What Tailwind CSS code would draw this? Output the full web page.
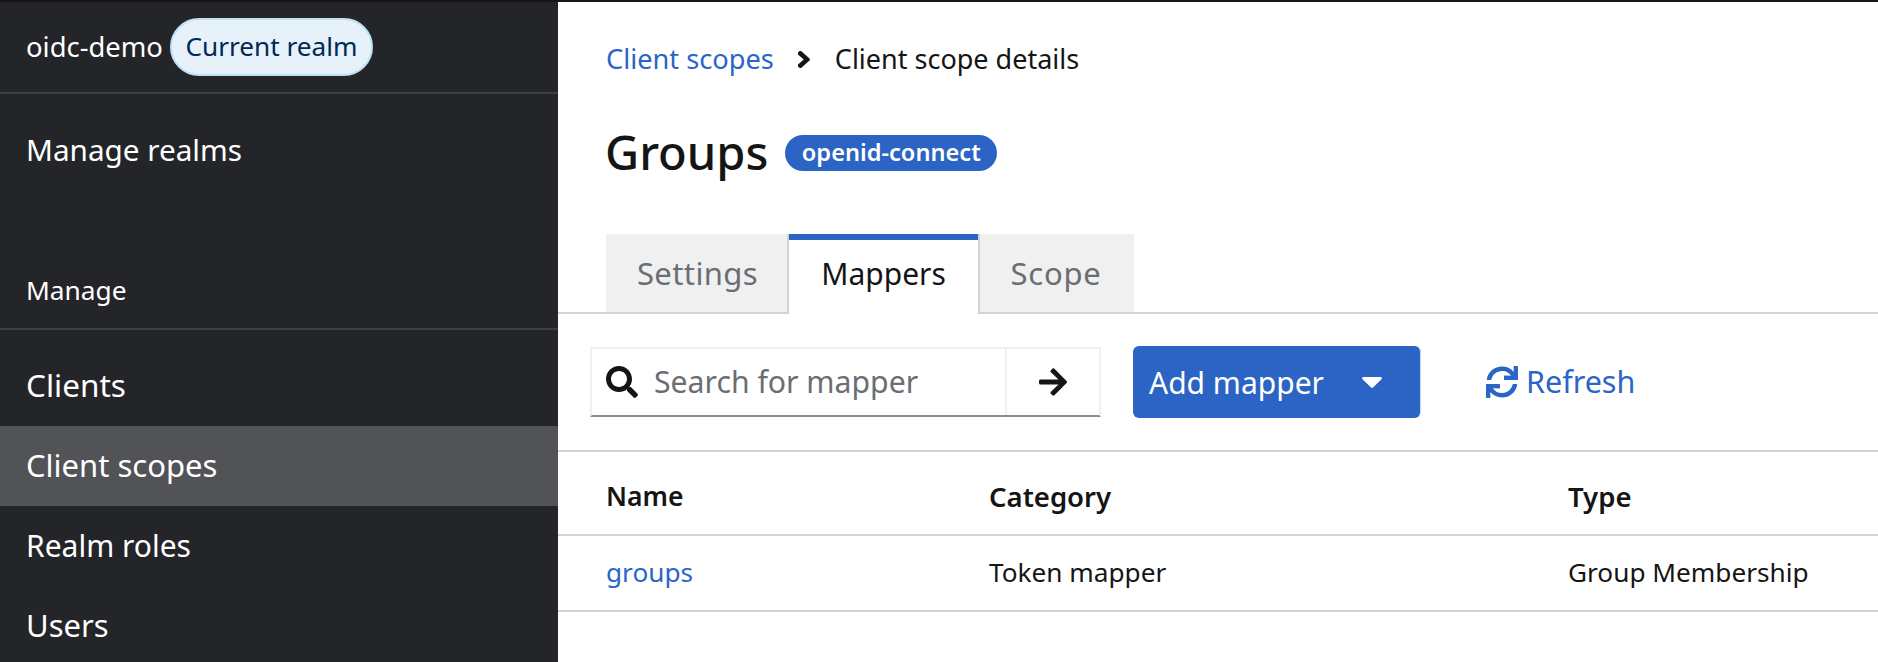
<!DOCTYPE html>
<html lang="en">
<head>
  <meta charset="UTF-8" />
  <title>Client scope details</title>
  <script src="https://cdn.jsdelivr.net/npm/@tailwindcss/browser@4"></script>
</head>
<body class="h-[662px] overflow-hidden bg-white font-['Noto_Sans',sans-serif]">
  <div class="h-[2px] bg-[#151515]"></div>
  <div class="flex h-[660px]">
    <!-- sidebar -->
    <aside class="w-[558px] shrink-0 bg-[#232529] text-white">
      <div class="flex h-[92px] items-center border-b-2 border-[#3c3f42] pl-[26px]">
        <span class="mr-[7px] text-[27.4px]">oidc-demo</span>
        <span class="flex h-[58px] w-[203px] items-center justify-center rounded-full border-2 border-[#bee1f4] bg-[#e7f1fa] text-[26.2px] text-[#002952]">Current realm</span>
      </div>
      <div class="flex h-[114px] items-start pl-[26px] pt-[34px] text-[29.7px] leading-[44px]">Manage realms</div>
      <div class="h-[122px] border-b-2 border-[#3c3f42] pl-[26px] pt-[64px] text-[26.3px] leading-[36px]">Manage</div>
      <nav class="text-[30px]">
        <div class="flex h-[96px] items-center pl-[26px] pt-[14px] text-[31.5px]">Clients</div>
        <div class="flex h-[80px] items-center bg-[#515357] pb-[2px] pl-[26px] text-[31px]">Client scopes</div>
        <div class="flex h-[80px] items-center pb-[2px] pl-[26px]">Realm roles</div>
        <div class="flex h-[80px] items-center pb-[2px] pl-[26px] text-[31px]">Users</div>
      </nav>
    </aside>

    <!-- main -->
    <main class="min-w-0 flex-1">
      <div class="flex h-[114px] items-center pl-[48px] text-[27.2px] text-[#151515]">
        <a class="text-[#2b65c8]">Client scopes</a>
        <svg class="ml-[24px] mr-[25px] h-[17px] w-[12px]" viewBox="32 96 200 320" preserveAspectRatio="none" fill="#151515"><path d="M224.3 273l-136 136c-9.4 9.4-24.6 9.4-33.9 0l-22.6-22.6c-9.4-9.4-9.4-24.6 0-33.9l96.4-96.4-96.4-96.4c-9.4-9.4-9.4-24.6 0-33.9L54.3 103c9.4-9.4 24.6-9.4 33.9 0l136 136c9.5 9.4 9.5 24.6.1 34z"/></svg>
        <span class="text-[27px]">Client scope details</span>
      </div>
      <div class="flex h-[118px] items-center pb-[46px] pl-[47px]">
        <h1 class="text-[47px] font-medium text-[#151515]">Groups</h1>
        <span class="ml-[17px] mt-[2px] flex h-[36px] w-[212px] items-center justify-center rounded-full bg-[#2b64c5] text-[23.6px] font-semibold text-white">openid-connect</span>
      </div>

      <!-- tabs -->
      <div class="flex h-[80px] border-b-2 border-[#d2d2d2] pl-[48px] text-[30px]">
        <div class="flex h-[78px] w-[183px] items-center justify-center rounded-tl-[2px] border-r-2 border-[#d2d2d2] bg-[#f0f0f0] pl-[2px] text-[31px] tracking-[0.4px] text-[#6a6e73]">Settings</div>
        <div class="flex h-[80px] w-[189px] items-center justify-center border-t-[6px] border-[#2b64c5] bg-white pb-[8px] text-[#151515]">Mappers</div>
        <div class="flex h-[78px] w-[156px] items-center justify-center border-l-2 border-[#d2d2d2] bg-[#f0f0f0] pr-[2px] text-[31px] tracking-[0.8px] text-[#6a6e73]">Scope</div>
      </div>

      <!-- toolbar -->
      <div class="flex h-[138px] items-start border-b-2 border-[#d2d2d2] pl-[32px] pt-[32px]">
        <div class="mt-px flex h-[70px] w-[511px] border-2 border-[#f0f0f0] border-b-[#8a8d90]">
          <div class="flex w-[415px] items-center border-r-2 border-[#f0f0f0] pl-[14px]">
            <svg class="h-[32px] w-[32px]" viewBox="0 0 512 512" fill="#151515"><path d="M505 442.7L405.3 343c-4.5-4.5-10.6-7-17-7H372c27.6-35.3 44-79.7 44-128C416 93.1 322.9 0 208 0S0 93.1 0 208s93.1 208 208 208c48.3 0 92.7-16.4 128-44v16.3c0 6.4 2.5 12.5 7 17l99.7 99.7c9.4 9.4 24.6 9.4 33.9 0l28.3-28.3c9.4-9.4 9.4-24.6.1-34zM208 336c-70.7 0-128-57.2-128-128 0-70.7 57.2-128 128-128 70.7 0 128 57.2 128 128 0 70.7-57.2 128-128 128z"/></svg>
            <span class="ml-[16px] text-[30.2px] text-[#6a6e73]">Search for mapper</span>
          </div>
          <div class="flex flex-1 items-center justify-center">
            <svg class="h-[32px] w-[32px]" viewBox="0 0 448 512" fill="#151515"><path d="M190.5 66.9l22.2-22.2c9.4-9.4 24.6-9.4 33.9 0L441 239c9.4 9.4 9.4 24.6 0 33.9L246.6 467.3c-9.4 9.4-24.6 9.4-33.9 0l-22.2-22.2c-9.5-9.5-9.3-25 .4-34.3L311.4 296H24c-13.3 0-24-10.7-24-24v-32c0-13.3 10.7-24 24-24h287.4L190.9 101.2c-9.8-9.3-10-24.8-.4-34.3z"/></svg>
          </div>
        </div>
        <button class="ml-[32px] flex h-[72px] w-[288px] items-center rounded-[6px] border-r border-[#c5d5ee] bg-[#2b64c5] pl-[16px] text-[30px] text-white">
          Add mapper
          <svg class="ml-[38px] h-[11px] w-[20px]" viewBox="0 0 20 11" fill="#fff"><path d="M1.5 0h17c1.2 0 1.8 1.4 1 2.3l-8.5 8.2c-.5.5-1.4.5-1.9 0L.5 2.3C-.3 1.4.3 0 1.5 0z"/></svg>
        </button>
        <a class="ml-[65px] flex h-[72px] items-center text-[30.5px] text-[#2b65c8]">
          <svg class="mr-[8px] h-[32px] w-[32px]" viewBox="0 0 512 512" fill="#2b65c8"><path d="M440.65 12.57l4 82.77A247.16 247.16 0 0 0 255.83 8C134.73 8 33.91 94.92 12.29 209.82A12 12 0 0 0 24.09 224h49.05a12 12 0 0 0 11.67-9.26 175.91 175.91 0 0 1 317-56.94l-101.46-4.86a12 12 0 0 0-12.57 12v47.41a12 12 0 0 0 12 12H500a12 12 0 0 0 12-12V12a12 12 0 0 0-12-12h-47.37a12 12 0 0 0-11.98 12.57zM255.83 432a175.61 175.61 0 0 1-146-77.8l101.8 4.87a12 12 0 0 0 12.57-12v-47.4a12 12 0 0 0-12-12H12a12 12 0 0 0-12 12V500a12 12 0 0 0 12 12h47.35a12 12 0 0 0 12-12.6l-4.15-82.57A247.17 247.17 0 0 0 255.83 504c121.11 0 221.93-86.92 243.55-201.82a12 12 0 0 0-11.8-14.18h-49.05a12 12 0 0 0-11.67 9.26A175.86 175.86 0 0 1 255.83 432z"/></svg>
          Refresh
        </a>
      </div>

      <!-- table -->
      <div class="grid h-[84px] grid-cols-[383px_579px_1fr] items-center border-b-2 border-[#d2d2d2] pl-[48px] pt-[8px] text-[27.5px] font-semibold text-[#151515]">
        <div class="text-[26.5px]">Name</div>
        <div>Category</div>
        <div>Type</div>
      </div>
      <div class="grid h-[76px] grid-cols-[383px_579px_1fr] items-center border-b-2 border-[#d2d2d2] pl-[48px] text-[26.2px] text-[#151515]">
        <a class="text-[#2b65c8]">groups</a>
        <div>Token mapper</div>
        <div>Group Membership</div>
      </div>
    </main>
  </div>
</body>
</html>
